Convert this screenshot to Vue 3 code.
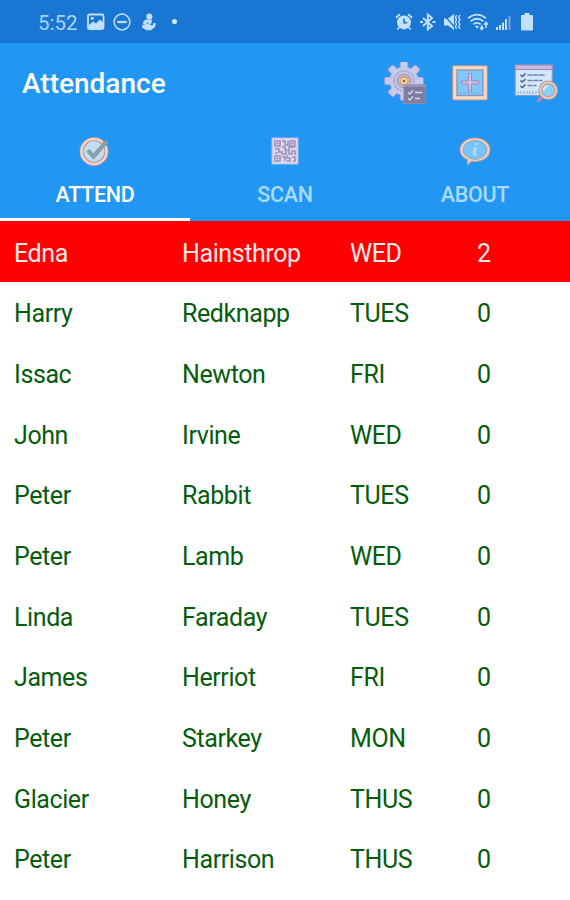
<script setup>
import { ref } from 'vue';

const tabs = ['ATTEND', 'SCAN', 'ABOUT'];
const active = ref('ATTEND');

// each bar draws two opposite teeth of the gear
const teeth = [0, 45, 90, 135];

const students = [
  { first: 'Edna',    last: 'Hainsthrop', day: 'WED',  missed: 2 },
  { first: 'Harry',   last: 'Redknapp',   day: 'TUES', missed: 0 },
  { first: 'Issac',   last: 'Newton',     day: 'FRI',  missed: 0 },
  { first: 'John',    last: 'Irvine',     day: 'WED',  missed: 0 },
  { first: 'Peter',   last: 'Rabbit',     day: 'TUES', missed: 0 },
  { first: 'Peter',   last: 'Lamb',       day: 'WED',  missed: 0 },
  { first: 'Linda',   last: 'Faraday',    day: 'TUES', missed: 0 },
  { first: 'James',   last: 'Herriot',    day: 'FRI',  missed: 0 },
  { first: 'Peter',   last: 'Starkey',    day: 'MON',  missed: 0 },
  { first: 'Glacier', last: 'Honey',      day: 'THUS', missed: 0 },
  { first: 'Peter',   last: 'Harrison',   day: 'THUS', missed: 0 },
];
</script>

<template>
  <div class="screen">
    <div class="status">
      <div class="status-left">
        <span class="clock">5:52</span>
        <svg width="18" height="18" viewBox="0 0 18 18">
          <rect x="1" y="1.5" width="15.5" height="14.5" rx="1.5" fill="none" stroke="currentColor" stroke-width="1.8" />
          <path d="M2 12l4-3.500 3 2 4-4 3 3v6H2z" fill="currentColor" />
          <circle cx="5.2" cy="5.2" r="1.5" fill="currentColor" />
        </svg>
        <svg width="18" height="18" viewBox="0 0 18 18">
          <circle cx="9" cy="9" r="7.9" fill="none" stroke="currentColor" stroke-width="1.5" />
          <path d="M4.3 9h9.4" stroke="currentColor" stroke-width="2.2" />
        </svg>
        <svg class="figure" width="16" height="18" viewBox="0 0 16 18">
          <circle cx="8.3" cy="3.500" r="3" fill="currentColor" />
          <path d="M5 6.500h6l-.5 3.500-1.500 2 2.500.5 1-2.500 2.500.5-1 3.500-4 3.200H5.500L1 14.500l.5-3 3 .8L1.500 10l2-2.500z" fill="currentColor" />
          <path d="M5 9.500l3 1.500" stroke="#1976d2" stroke-width=".8" />
        </svg>
        <span class="dot"></span>
      </div>
      <div class="status-right">
        <svg width="18" height="18" viewBox="0 0 18 18">
          <path d="M.8 4.8L5 1.2M17.2 4.8L13 1.2M4 14.5l-1.5 2M14 14.5l1.5 2" stroke="currentColor" stroke-width="1.8" />
          <circle cx="9" cy="9.4" r="7" fill="currentColor" />
          <path d="M9 5.5v4.3h3.3" fill="none" stroke="#1976d2" stroke-width="1.6" />
        </svg>
        <svg width="18" height="18" viewBox="0 0 18 18">
          <path d="M4 5l9 8-4.2 3.5v-15L13 5l-9 8" fill="none" stroke="currentColor" stroke-width="1.9" />
          <path d="M1 9h3M13.5 9h3" stroke="currentColor" stroke-width="2.2" />
        </svg>
        <svg width="18" height="18" viewBox="0 0 18 18">
          <path d="M1 5.500h4L11 1v16l-6-4.500H1z" fill="currentColor" />
          <path d="M1 2l10.5 12" stroke="#1976d2" stroke-width="1.3" />
          <path d="M13.5 2l-1 2.3 1 2.3-1 2.4 1 2.3-1 2.3 1 2.4M16.8 2l-1 2.3 1 2.3-1 2.4 1 2.3-1 2.3 1 2.4" fill="none" stroke="currentColor" stroke-width="1.4" />
        </svg>
        <svg width="22" height="18" viewBox="0 0 22 18">
          <path d="M1 5.2q9-7.2 18 0M3.5 8.4q6.500-5.300 13 0M6.300 11.400q3.700-3 7.400 0" fill="none" stroke="currentColor" stroke-width="1.8" />
          <path d="M8 13.200q2-1.500 4 0l-2 2.500z" fill="currentColor" />
          <path d="M14.800 12v4.500M13 14.500l1.800 2 1.700-2M19 15V9.500M17 11.800l2-2.300 2 2.300" fill="none" stroke="currentColor" stroke-width="1.500" />
        </svg>
        <svg width="17" height="18" viewBox="0 0 17 18">
          <path d="M2 17v-3M5 17v-5M8 17V9.500M11 17V6" stroke="currentColor" stroke-width="2" />
          <path d="M14.500 17V3" stroke="currentColor" stroke-width="2" opacity=".5" />
        </svg>
        <svg class="battery" width="12" height="18" viewBox="0 0 12 18">
          <path d="M3.500 0h5v2H11q1 0 1 1v13.500q0 1-1 1H1q-1 0-1-1V3q0-1 1-1h2.500z" fill="currentColor" />
        </svg>
      </div>
    </div>

    <header class="appbar">
      <h1 class="title">Attendance</h1>
      <div class="actions">
        <!-- settings -->
        <svg width="42" height="44" viewBox="0 0 42 44">
          <g fill="#8f8fc6">
            <rect v-for="a in teeth" :key="a" x="15.700" y="-1" width="8.600" height="40" rx="2" :transform="`rotate(${a} 20 19)`" />
            <circle cx="20" cy="19" r="14.800" />
          </g>
          <g fill="#c5cbed">
            <rect v-for="a in teeth" :key="a" x="16.500" y="-.2" width="7" height="38.400" rx="1.500" :transform="`rotate(${a} 20 19)`" />
            <circle cx="20" cy="19" r="14" />
          </g>
          <circle cx="20" cy="19" r="10" fill="none" stroke="#a5a1c4" stroke-width="1.600" stroke-dasharray="2 1" />
          <circle cx="20" cy="19" r="7" fill="#bdb4cd" stroke="#a595ad" />
          <circle cx="20" cy="19" r="4" fill="#f8d38e" stroke="#d5a073" stroke-width="1.300" />
          <circle cx="20" cy="19" r="1.200" fill="#725e72" />
          <rect x="20" y="23" width="21.500" height="18.500" fill="#7b7c9f" stroke="#9c86a3" stroke-width="1.200" />
          <path d="M19.500 23.500h22.500" stroke="#a294b8" stroke-width="2.500" />
          <path d="M24 30.500l1.700 1.500 3.300-3.500M31 30.500h7.500M24 36.500l1.700 1.500 3.300-3.500M31 36.500h5" fill="none" stroke="#d9d9e9" stroke-width="1.400" />
        </svg>
        <!-- add -->
        <svg class="add" width="36" height="36" viewBox="0 0 36 36">
          <rect x=".7" y=".7" width="34.600" height="34.300" rx="1" fill="#f5dac3" stroke="#b8928f" stroke-width="1" />
          <rect x="5" y="5" width="26" height="25.500" fill="#7fc6fa" stroke="#8a94b3" stroke-width="1.300" />
          <path d="M8 28h20" stroke="#5b9fd2" stroke-dasharray="2 1.500" />
          <path d="M16.500 8.500h3v7.500h7v3h-7v7h-3v-7h-7v-3h7z" fill="#cfc5e2" stroke="#a389ae" stroke-width="1" />
        </svg>
        <!-- report -->
        <svg width="44" height="40" viewBox="0 0 44 40">
          <rect x="1.200" y="1" width="37" height="30.500" fill="#d3e7fa" stroke="#829bcd" stroke-width="1" />
          <rect x="1.200" y="1" width="37" height="4.500" fill="#cbb9dc" stroke="#9b8cba" stroke-width="1" />
          <path d="M6.500 11l2 1.500 3-3M6.500 16.500l2 1.500 3-3M6.500 22l2 1.500 3-3" fill="none" stroke="#59638f" stroke-width="1.600" />
          <path d="M13.500 11h18M13.500 16.500h15M13.500 21.500h9" stroke="#7182ad" stroke-width="1.500" stroke-dasharray="5 .7" />
          <path d="M3.500 28.500h22" stroke="#8b97be" stroke-width="2.500" stroke-dasharray="1 2" />
          <path d="M28 33l-4.500 4.500" stroke="#c083aa" stroke-width="3.500" />
          <circle cx="34.300" cy="26.300" r="7.900" fill="#8dd0fa" stroke="#a88c95" stroke-width="3.800" />
          <circle cx="34.300" cy="26.300" r="7.900" fill="none" stroke="#e8cbb7" stroke-width="2.200" />
          <path d="M29.800 26.500q0-4 4-4.500" fill="none" stroke="#d5effe" stroke-width="2" />
        </svg>
      </div>
    </header>

    <nav class="tabs">
      <button v-for="t in tabs" :key="t" class="tab" :class="{ active: active === t }" @click="active = t">
        <svg v-if="t === 'ATTEND'" class="tab-icon" viewBox="0 0 32 30">
          <circle cx="15" cy="15.500" r="12.500" fill="#c3dcee" stroke="#b08f95" stroke-width="4.200" />
          <circle cx="15" cy="15.500" r="12.500" fill="none" stroke="#efd6ca" stroke-width="2.600" />
          <path d="M9 14.500l5.500 6L28 5" fill="none" stroke="#738d9d" stroke-width="4" />
          <path d="M9 14.500l5.500 6L28 5" fill="none" stroke="#8aa3ad" stroke-width="2.600" />
        </svg>
        <svg v-else-if="t === 'SCAN'" class="tab-icon" viewBox="0 0 32 30">
          <rect x="3" y="2" width="26" height="26" fill="#dcd7ee" stroke="#b6bfe6" />
          <g fill="none" stroke="#9c8fb5" stroke-width="1.500">
            <path d="M6 5h5v5H6zM21 5h5v5h-5zM6 20h5v5H6z" />
            <path d="M13 5h3v4h3V5M13 11h3v3h4v-3h6M6 13h4v3h4M6 17h3M12 18h5v-3M20 15v3h3v-3h3v4M13 21h3v4M18 19v3h3v3h-3M23 21h3v4h-2" />
          </g>
          <path d="M8 7h1v1H8zM23 7h1v1h-1zM8 22h1v1H8z" stroke="#a77e9c" />
        </svg>
        <svg v-else class="tab-icon" viewBox="0 0 32 30">
          <path d="M16 2C24.500 2 31 7.200 31 13.800S24.500 25.500 16 25.500q-2 0-3.500-.3L8.500 29v-5.200C4 21.800 1 18.200 1 13.800 1 7.200 7.500 2 16 2z" fill="#f0d8cd" stroke="#b99a9d" stroke-width="1.200" />
          <ellipse cx="16" cy="13.800" rx="12" ry="9.500" fill="#78c4f6" stroke="#a49fa9" stroke-width="1" />
          <path d="M16.500 7h2l-.4 2h-2zM14.500 11h3.200l-1.300 7h1.600l-.3 1.500h-4l1.300-7h-.8z" fill="#b5dcf8" />
        </svg>
        <span class="tab-label">{{ t }}</span>
      </button>
    </nav>

    <main class="list">
      <div v-for="(s, i) in students" :key="i" class="row" :class="{ alert: s.missed > 0 }">
        <span>{{ s.first }}</span>
        <span>{{ s.last }}</span>
        <span>{{ s.day }}</span>
        <span>{{ s.missed }}</span>
      </div>
    </main>
  </div>
</template>

<style>
body { margin: 0; background: #fff; }
</style>

<style scoped>
.screen {
  width: 570px;
  height: 900px;
  overflow: hidden;
  display: flex;
  flex-direction: column;
  font-family: Roboto, "Liberation Sans", sans-serif;
  background: #fff;
}
.status {
  height: 43px;
  flex-shrink: 0;
  box-sizing: border-box;
  padding: 0 37px 0 38px;
  display: flex;
  align-items: center;
  justify-content: space-between;
  background: #1976d2;
  color: #c3e1fa;
}
.status-left { display: flex; align-items: center; gap: 8px; }
.clock { font-size: 20.5px; line-height: 24px; margin: 2px 1px 0 0; color: #a9d3f6; }
.figure { margin-left: 2px; }
.dot {
  width: 5px;
  height: 5px;
  margin-left: 7px;
  border-radius: 50%;
  background: #d5ecfc;
}
.status-right { display: flex; align-items: center; gap: 6px; }
.battery { margin-left: 3px; }
.appbar {
  height: 81px;
  flex-shrink: 0;
  box-sizing: border-box;
  padding: 0 12px 0 22px;
  display: flex;
  align-items: center;
  justify-content: space-between;
  background: #2196f3;
}
.title { margin: 0; font-size: 28px; font-weight: 500; line-height: 32px; color: #fff; }
.actions { display: flex; align-items: center; gap: 26px; }
.add { margin-bottom: 2px; }
.tabs { height: 97px; flex-shrink: 0; display: flex; background: #2196f3; }
.tab {
  flex: 1;
  box-sizing: border-box;
  padding: 12px 0 0;
  border: none;
  border-bottom: 3px solid transparent;
  background: transparent;
  display: flex;
  flex-direction: column;
  align-items: center;
  gap: 16px;
  font-family: inherit;
  color: #a9dafb;
  cursor: pointer;
}
.tab.active { color: #fff; border-bottom-color: #fff; }
.tab-icon { width: 32px; height: 30px; }
.tab-label { font-size: 21.5px; font-weight: 500; line-height: 25px; letter-spacing: -0.3px; }
.row {
  height: 60.65px;
  box-sizing: border-box;
  padding: 5px 0 0 14px;
  display: grid;
  grid-template-columns: 168px 168px 127px 1fr;
  align-items: center;
  font-size: 25px;
  line-height: 30px;
  letter-spacing: -0.4px;
  color: #065c0d;
}
.row.alert { background: #f00; color: #ffe9e6; }
</style>
